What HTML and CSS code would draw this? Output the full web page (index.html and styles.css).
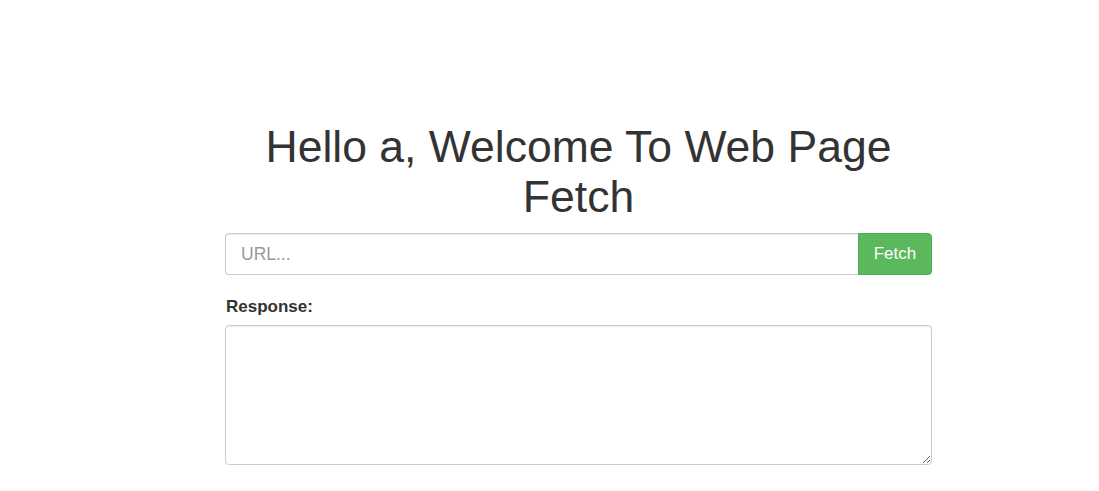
FILE: index.html
```html
<!DOCTYPE html>
<html>
<head>
<meta charset="utf-8">
<link rel="stylesheet" href="styles.css">
</head>
<body>
<div class="wrap">
  <h1 class="title">Hello a, Welcome To Web Page Fetch</h1>
  <div class="input-group">
    <input class="url" type="text" placeholder="URL...">
    <button class="btn-fetch">Fetch</button>
  </div>
  <label class="label">Response:</label>
  <textarea class="response"></textarea>
</div>
</body>
</html>
```
FILE: styles.css
```css
html, body { margin: 0; padding: 0; background: #fff; }
body {
  font-family: "Liberation Sans", Arial, sans-serif;
  color: #333;
  font-size: 14px;
}
.wrap {
  width: 707px;
  margin-left: 225px;
  padding-top: 122px;
  display: flex;
  flex-direction: column;
}
.title {
  margin: 0 0 11px;
  font-size: 44.5px;
  font-weight: 500;
  line-height: 50px;
  text-align: center;
  color: #333;
}
.input-group {
  display: flex;
  height: 42px;
}
.url {
  flex: 1;
  box-sizing: border-box;
  height: 42px;
  margin: 0;
  border: 1px solid #ccc;
  border-right: none;
  border-radius: 4px 0 0 4px;
  padding: 0 15px;
  font-family: inherit;
  font-size: 17.5px;
  color: #555;
  box-shadow: inset 0 1px 1px rgba(0,0,0,.075);
  outline: none;
}
.url::placeholder { color: #999; }
.btn-fetch {
  width: 74px;
  height: 42px;
  margin: 0;
  border: 1px solid #4cae4c;
  border-radius: 0 4px 4px 0;
  background: #5cb85c;
  color: #fff;
  font-family: inherit;
  font-size: 17px;
  padding: 0;
}
.label {
  margin-top: 22px;
  padding-left: 1px;
  font-weight: bold;
  font-size: 17px;
  line-height: 20px;
  color: #333;
}
.response {
  margin-top: 8px;
  box-sizing: border-box;
  width: 707px;
  height: 140px;
  border: 1px solid #ccc;
  border-radius: 4px;
  box-shadow: inset 0 1px 1px rgba(0,0,0,.075);
  font-family: inherit;
  font-size: 14px;
  padding: 6px 12px;
  outline: none;
}
```
